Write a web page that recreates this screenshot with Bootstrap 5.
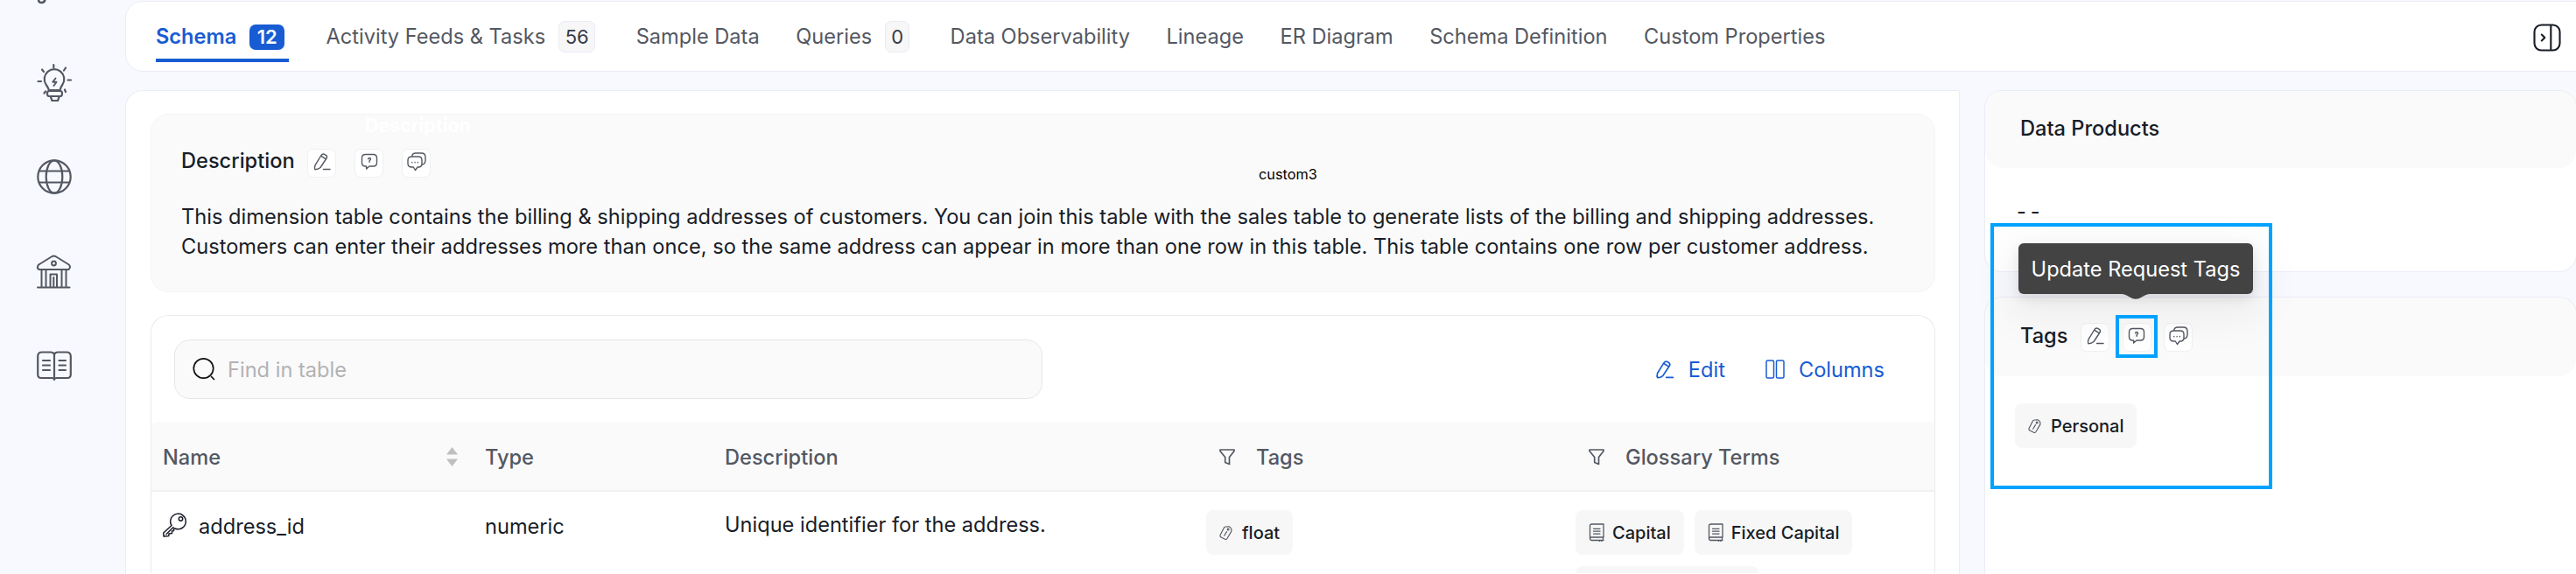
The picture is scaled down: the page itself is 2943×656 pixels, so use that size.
<!DOCTYPE html>
<html lang="en">
<head>
<meta charset="utf-8">
<title>Table schema</title>
<link href="https://cdn.jsdelivr.net/npm/bootstrap@5.3.0/dist/css/bootstrap.min.css" rel="stylesheet">
<style>
  :root { --ink:#181d27; --muted:#535862; --brand:#175cd3; --line:#eaecf5; --soft:#fafafa; --hl:#00a2ff; }
  body { font-family: Inter, "Liberation Sans", sans-serif; font-size:23.6px; line-height:34px; color:var(--ink); background:#f8f9fe; height:656px; overflow:hidden; }
  svg { display:block; flex:none; fill:none; stroke:currentColor; stroke-linecap:round; stroke-linejoin:round; overflow:visible; }
  .sidebar { width:143px; height:656px; flex:none; color:#535862; }
  .sidebar svg { margin-left:42px; }
  .main { width:2801px; flex:none; padding-top:1px; }
  .tabbar { height:81px; margin-right:-24px; background:#fff; border:1px solid var(--line); border-radius:20px; padding-left:34px; margin-bottom:21px; color:#535862; }
  .tabitem { white-space:nowrap; margin-right:41.500px; padding-top:1px; }
  .tabitem.counted { margin-right:46.500px; padding-top:0; }
  .tabitem.current { color:var(--brand); font-weight:600; height:69px; border-bottom:4px solid var(--brand); padding-top:15px; width:152px; margin-right:42.500px; align-self:flex-start; }
  .count { font-size:22px; line-height:34px; border:1px solid var(--line); background:#f7f7f8; border-radius:7px; color:#363a44; text-align:center; height:36px; }
  .current .count { background:var(--brand); border:0; color:#fff; height:29px; line-height:29px; width:40px; margin-left:15px; }
  .content { width:2096px; flex:none; height:553px; background:#fff; border:1px solid var(--line); border-bottom:0; border-radius:20px 2px 0 0; padding:26px 27px 0 28px; overflow:hidden; }
  .desc { height:204px; background:var(--soft); border:1px solid #f5f5f6; border-radius:20px; padding:38px 33px 0 34px; position:relative; white-space:nowrap; margin-bottom:26px; }
  .desc-text { margin-top:28px; font-size:23.630px; }
  .head { font-weight:500; }
  .tool { width:33px; height:33px; border:1px solid #f0f0f3; border-radius:7px; background:#fff; color:#535862; display:flex; justify-content:center; padding-top:3px; }
  .ghost { position:absolute; left:244px; top:-5px; font-size:21.400px; font-weight:700; color:#fff; }
  .stray { position:absolute; left:1265px; top:51px; font-size:16.300px; color:#000; }
  .tcard { height:295px; border:1px solid #ebebed; border-bottom:0; border-radius:20px 20px 0 0; overflow:hidden; }
  .tools { height:121px; padding:27px 57px 26px 26px; color:var(--brand); }
  .tools span { padding-top:1px; }
  .search { width:992px; height:68px; border:1px solid #e6e6e8; border-radius:18px; background:var(--soft); color:#b2b2b4; padding-left:20px; gap:14px; }
  .search svg { color:#111; }
  .grid { table-layout:fixed; width:2037px; margin:0; color:var(--ink); --bs-table-bg:transparent; }
  .grid th { height:79px; background:var(--soft); color:var(--muted); font-weight:500; padding:4px 0 0 13px; vertical-align:middle; border-bottom:2px solid #f0f0f1; }
  .grid th:first-child { border-top-left-radius:6px; }
  .grid td { padding:21px 0 0 13px; border:0; white-space:nowrap; vertical-align:top; }
  .chip { height:51px; background:#f7f7f7; border-radius:8px; font-size:20px; font-weight:500; padding:0 15px; gap:11px; white-space:nowrap; }
  .chip svg { color:#535862; }
  .chip.term { gap:9px; }
  .side { width:677px; margin-left:28px; flex:none; }
  .scard { background:#fff; border:1px solid var(--line); border-radius:20px; }
  .scard .shead { background:var(--soft); border-radius:20px; height:88px; padding-left:40px; font-weight:500; }
  .tip { position:absolute; left:2306px; top:278px; width:268px; height:58px; background:#434343; border-radius:6px; color:#fff; text-align:center; line-height:59px; box-shadow:0 5px 14px rgba(0,0,0,.10), 0 15px 47px 13px rgba(0,0,0,.05); }
  .tip svg { position:absolute; left:118px; top:58px; fill:#434343; stroke:none; }
  .mark-big, .mark-small { position:absolute; border:4px solid var(--hl); }
  .mark-big { left:2274px; top:255px; width:322px; height:304px; }
  .mark-small { left:2417px; top:360px; width:48px; height:49px; }
</style>
</head>
<body class="d-flex">
<svg width="0" height="0" class="position-absolute">
  <symbol id="pen" viewBox="0 0 20 22"><path d="M2 19.800Q1 18 2 14.800L9 3.500Q10.500 1.200 12.700 2.300L14.700 3.600Q16.200 5 15 7L8 17.500Q5.500 19.800 2 19.800zM9 4.300 14.500 7.800M11.500 19.500H19"/></symbol>
  <symbol id="ask" viewBox="0 0 20 22"><path d="M5.500 2.500H14.500q4 0 4 4V12q0 4-4 4H10L6.600 19V16H5.500Q1.500 16 1.500 12V6.500Q1.500 2.500 5.500 2.500zM8.600 7.800q.200-1.300 1.500-1.300T11.500 7.800q0 .800-1.400 1.900v1.500"/></symbol>
  <symbol id="chat" viewBox="0 0 22 22"><path d="M5.500 4.800Q6.200 1 10 1H16.500Q21 1 21 5.500V9Q21 13.500 17.500 14M5.500 5H13Q17 5 17 9V13Q17 17 13 17H12L9.500 20.500 7.300 17H5.500Q1 17 1 13V9Q1 5 5.500 5zM5.800 11.500v.3M9.100 11.500v.3M12.400 11.500v.3"/></symbol>
  <symbol id="label" viewBox="0 0 16 18"><path d="M6 2.300Q6.500 1.500 7.500 1.500L12 1.200Q13.300 1.500 14.800 4.500V7L9.500 16Q8.500 17.500 7 16.800L1.800 14Q.500 13 1.300 11.500zM9 7.500 6 12.500"/><circle cx="10.800" cy="4.800" r="1"/></symbol>
  <symbol id="term" viewBox="0 0 18 21"><path d="M1.500 17.500V3Q1.500 1 3.500 1H17V16H3.300Q1.500 16 1.500 17.700T3.300 19.500H17M16.500 16v3.500M5.500 6.300h7.500M5.500 9.200h7.500M5.500 12.100h7.500M12.500 19.500v1M14.800 19.500v1"/></symbol>
  <symbol id="funnel" viewBox="0 0 18 19"><path d="M1 1H17V2.500L11.500 9.500V17.500L6.700 15.500V9.500L1 2.500z"/></symbol>
</svg>

<aside class="sidebar">
  <svg width="12" height="6" stroke-width="2.600"><path d="M2-1Q2 3 5.500 3T9.500-1"/></svg>
  <svg width="40" height="44" viewBox="0 0 40 44" stroke-width="2.200" style="margin-top:67px"><path d="M14 30Q13 27 10.500 23.500A11.300 11.300 0 1 1 29.500 23.500Q27 27 26.500 30zM19.300 1V4.500M6 6.500 8 9M33 4.500 31 7.500M1.500 20H5M35.500 18.500H39M10 31.500 8.500 33.500M32 29.500 33 32M14 31H27Q29 31 29 34T27 37H14Q12 37 12 34T14 31zM16 38 17.500 42H24L25.500 38"/><path d="M21.500 16.500 18.300 20.700H22.500L19.500 25" stroke-width="1.900"/></svg>
  <svg width="40" height="40" viewBox="0 0 40 40" stroke-width="2.200" style="margin-top:65px"><circle cx="20" cy="20" r="18.700"/><ellipse cx="20" cy="20" rx="9.300" ry="18.700"/><path d="M3.500 13.500H36.500M3.500 26.500H36.500"/></svg>
  <svg width="40" height="40" viewBox="0 0 40 40" stroke-width="2" style="margin-top:69px"><path d="M2.500 17Q.300 15.500 1 13.500T3 11L17.500 2Q19.500 1 21.500 2L36 11Q37.500 12 38 13.500T36.500 17zM1 37.500H37.500M5.500 17V37M10.500 17V37M28.500 17V37M33.500 17V37M15.500 37V22.500H23V37M19.300 26V37"/><circle cx="19.500" cy="10" r="2.400"/></svg>
  <svg width="40" height="36" viewBox="0 0 40 36" stroke-width="2.200" style="margin-top:70px"><path d="M20 4Q19 1.500 16 1.500H6Q1.200 1.500 1.200 6V27Q1.200 31 5 31H17Q20 31 20 33 20 31 23 31H35Q38.800 31 38.800 27V6Q38.800 1.500 34 1.500H24Q21 1.500 20 4V33M7 11H15M7 16.500H15M7 22H15M25.500 11H33M25.500 16.500H33M25.500 22H33"/></svg>
</aside>

<main class="main">
  <nav class="tabbar d-flex align-items-center">
    <div class="tabitem current d-flex align-items-center"><span>Schema</span><span class="count">12</span></div>
    <div class="tabitem counted d-flex align-items-center"><span>Activity Feeds &amp; Tasks</span><span class="count" style="width:42px;margin-left:15px">56</span></div>
    <div class="tabitem"><span>Sample Data</span></div>
    <div class="tabitem counted d-flex align-items-center"><span>Queries</span><span class="count" style="width:28px;margin-left:15px">0</span></div>
    <div class="tabitem"><span>Data Observability</span></div>
    <div class="tabitem"><span>Lineage</span></div>
    <div class="tabitem"><span>ER Diagram</span></div>
    <div class="tabitem"><span>Schema Definition</span></div>
    <div class="tabitem"><span>Custom Properties</span></div>
    <svg class="ms-auto" width="32" height="32" viewBox="0 0 32 32" stroke-width="2.100" style="margin:2px 41px 0 0;color:#181d27"><rect x="1.500" y="1.500" width="29" height="29" rx="8"/><path d="M20.300 2V30M9.800 12.500 13.300 16 9.800 19.500"/></svg>
  </nav>

  <div class="d-flex">
    <section class="content">
      <div class="desc">
        <div class="d-flex align-items-center" style="height:34px">
          <span class="head" style="width:144px;margin-bottom:5px">Description</span>
          <div class="d-flex" style="gap:21px">
            <span class="tool"><svg width="20" height="22" stroke-width="1.400"><use href="#pen"/></svg></span>
            <span class="tool"><svg width="20" height="22" stroke-width="1.400"><use href="#ask"/></svg></span>
            <span class="tool"><svg width="22" height="22" stroke-width="1.400"><use href="#chat"/></svg></span>
          </div>
        </div>
        <div class="desc-text">This dimension table contains the billing &amp; shipping addresses of customers. You can join this table with the sales table to generate lists of the billing and shipping addresses.<br>Customers can enter their addresses more than once, so the same address can appear in more than one row in this table. This table contains one row per customer address.</div>
        <span class="ghost">Description</span>
        <span class="stray">custom3</span>
      </div>

      <div class="tcard">
        <div class="tools d-flex align-items-center">
          <div class="search d-flex align-items-center"><svg width="26" height="26" viewBox="0 0 26 26" stroke-width="1.700"><circle cx="12.500" cy="12" r="11.200"/><path d="M21.500 21.500 24.500 24.500"/></svg><span>Find in table</span></div>
          <div class="d-flex align-items-center ms-auto"><svg width="22" height="23" stroke-width="1.600"><use href="#pen"/></svg><span style="margin-left:16px">Edit</span></div>
          <div class="d-flex align-items-center" style="margin-left:46px"><svg width="22" height="22" viewBox="0 0 22 22" stroke-width="1.500"><rect x="1" y="1" width="8.500" height="20" rx="1.500"/><rect x="12.500" y="1" width="8.500" height="20" rx="1.500"/></svg><span style="margin-left:16px">Columns</span></div>
        </div>
        <table class="table grid">
          <colgroup><col style="width:368px"><col style="width:274px"><col style="width:550px"><col style="width:422px"><col></colgroup>
          <thead><tr>
            <th><div class="d-flex align-items-center justify-content-between"><span>Name</span><svg width="13" height="22" style="fill:#bfbfbf;stroke:none;margin:0 18px 3px 0"><path d="M6.500 0 13 8.500H0zM0 13.500H13L6.500 22z"/></svg></div></th>
            <th>Type</th>
            <th>Description</th>
            <th><div class="d-flex align-items-center" style="padding-left:15px"><svg width="18" height="19" stroke-width="1.700" style="margin-bottom:2px"><use href="#funnel"/></svg><span style="margin-left:24px">Tags</span></div></th>
            <th><div class="d-flex align-items-center" style="padding-left:15px"><svg width="18" height="19" stroke-width="1.700" style="margin-bottom:2px"><use href="#funnel"/></svg><span style="margin-left:24px">Glossary Terms</span></div></th>
          </tr></thead>
          <tbody><tr>
            <td><div class="d-flex" style="padding-top:2px"><svg width="28" height="28" viewBox="0 0 28 28" stroke-width="1.500" style="margin:1px 13px 0 0"><path d="M10 14.500A8.800 8.800 0 1 1 14 18L12.500 18.300V20.500L10.500 21V23.500L7 24 6.800 26.500 1 27 .800 23zM12 16.500 4 24.500"/><circle cx="20.500" cy="7" r="2.200"/></svg><span>address_id</span></div></td>
            <td style="padding-top:23px">numeric</td>
            <td>Unique identifier for the address.</td>
            <td><div class="d-inline-flex align-items-center chip"><svg width="15" height="18" stroke-width="1.200"><use href="#label"/></svg><span>float</span></div></td>
            <td><div class="d-flex flex-wrap" style="column-gap:12px;row-gap:13px">
              <div class="d-flex align-items-center chip term"><svg width="18" height="21" stroke-width="1.300"><use href="#term"/></svg><span>Capital</span></div>
              <div class="d-flex align-items-center chip term"><svg width="18" height="21" stroke-width="1.300"><use href="#term"/></svg><span>Fixed Capital</span></div>
              <div class="chip" style="width:209px"></div>
            </div></td>
          </tr></tbody>
        </table>
      </div>
    </section>

    <aside class="side">
      <div class="scard" style="height:208px;margin-bottom:28px">
        <div class="shead d-flex align-items-center"><span style="margin-bottom:2px">Data Products</span></div>
        <div style="padding:33px 0 0 36px;letter-spacing:5px">--</div>
      </div>
      <div class="scard border-bottom-0 rounded-bottom-0" style="height:317px">
        <div class="shead d-flex align-items-center" style="height:90px"><span style="width:69px;margin-bottom:3px">Tags</span>
          <div class="d-flex" style="gap:14.500px">
            <span class="tool"><svg width="20" height="22" stroke-width="1.400"><use href="#pen"/></svg></span>
            <span class="tool"><svg width="20" height="22" stroke-width="1.400"><use href="#ask"/></svg></span>
            <span class="tool"><svg width="22" height="22" stroke-width="1.400"><use href="#chat"/></svg></span>
          </div>
        </div>
        <div style="padding:31px 0 0 34px"><div class="d-inline-flex align-items-center chip"><svg width="15" height="18" stroke-width="1.200"><use href="#label"/></svg><span>Personal</span></div></div>
      </div>
    </aside>
  </div>
</main>

<div class="tip">Update Request Tags<svg width="32" height="6"><path d="M0 0H32Q28 0 23 3.500 16 8 9 3.500 4 0 0 0z"/></svg></div>
<div class="mark-big"></div>
<div class="mark-small"></div>
<script src="https://cdn.jsdelivr.net/npm/bootstrap@5.3.0/dist/js/bootstrap.bundle.min.js"></script>
</body>
</html>
